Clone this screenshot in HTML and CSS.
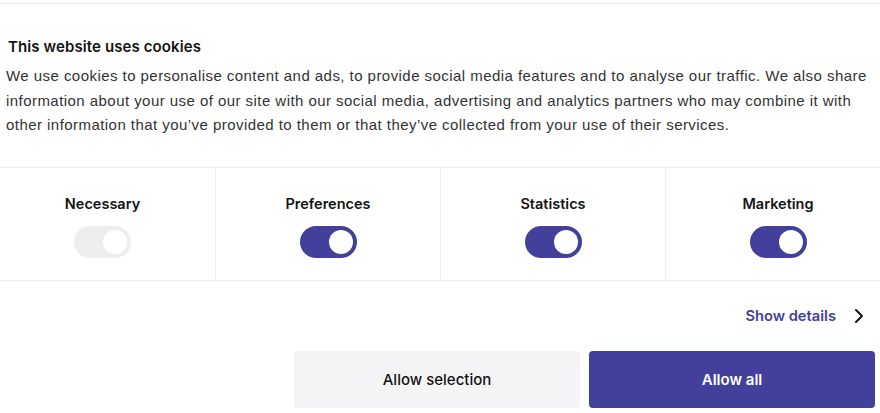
FILE: index.html
```html
<!DOCTYPE html>
<html>
<head>
<meta charset="utf-8">
<link rel="stylesheet" href="styles.css">
</head>
<body>
<div class="dialog">
  <div class="content">
    <h2 class="title">This website uses cookies</h2>
    <p class="text">We use cookies to personalise content and ads, to provide social media features and to analyse our traffic. We also share information about your use of our site with our social media, advertising and analytics partners who may combine it with other information that you’ve provided to them or that they’ve collected from your use of their services.</p>
  </div>
  <div class="levels">
    <div class="level">
      <span class="label">Necessary</span>
      <span class="toggle disabled"><span class="knob"></span></span>
    </div>
    <div class="level">
      <span class="label">Preferences</span>
      <span class="toggle"><span class="knob"></span></span>
    </div>
    <div class="level">
      <span class="label">Statistics</span>
      <span class="toggle"><span class="knob"></span></span>
    </div>
    <div class="level">
      <span class="label">Marketing</span>
      <span class="toggle"><span class="knob"></span></span>
    </div>
  </div>
  <div class="details">
    <a class="details-link">Show details</a>
    <svg class="chev" width="10" height="16" viewBox="0 0 10 16"><path d="M2 2l6 6-6 6" fill="none" stroke="#141414" stroke-width="2" stroke-linecap="round" stroke-linejoin="round"/></svg>
  </div>
  <div class="buttons">
    <button class="btn btn-light">Allow selection</button>
    <button class="btn btn-primary">Allow all</button>
  </div>
</div>
</body>
</html>
```
FILE: styles.css
```css
* { box-sizing: border-box; }
html, body { margin: 0; padding: 0; background: #fff; overflow: hidden; }
body { width: 880px; height: 413px; }
.dialog {
  border-top: 1px solid #eeeeee;
  margin-top: 3px;
}
.content { padding: 34px 6px 0 6px; }
.title {
  font-family: Inter, "Liberation Sans", sans-serif;
  font-weight: 600;
  font-size: 15px;
  color: #141414;
  margin: 0 0 0 2px;
  line-height: 18px;
  letter-spacing: 0.1px;
}
.text {
  font-family: "Liberation Sans", Arial, sans-serif;
  font-size: 15px;
  line-height: 24.5px;
  color: #333333;
  margin: 8px 0 0 0;
  letter-spacing: 0.45px;
}
.levels {
  display: grid;
  grid-template-columns: repeat(4, 225px);
  margin: 29px -10px 0 -10px;
  border-top: 1px solid #eeeeee;
  border-bottom: 1px solid #eeeeee;
  height: 114px;
}
.level {
  display: flex;
  flex-direction: column;
  align-items: center;
  padding-top: 27px;
  border-left: 1px solid #eeeeee;
}
.level:first-child { border-left: none; }
.label {
  font-family: Inter, "Liberation Sans", sans-serif;
  font-weight: 600;
  font-size: 14.5px;
  color: #141414;
  line-height: 18px;
}
.toggle {
  margin-top: 13px;
  width: 57px;
  height: 32px;
  border-radius: 16px;
  background: #43409b;
  display: flex;
  align-items: center;
  justify-content: flex-end;
  padding-right: 4px;
}
.toggle.disabled { background: #eeeeee; }
.knob {
  width: 24px;
  height: 24px;
  border-radius: 50%;
  background: #fff;
}
.details {
  display: flex;
  justify-content: flex-end;
  align-items: center;
  height: 70px;
  padding-right: 16px;
  gap: 18px;
}
.details-link {
  font-family: Inter, "Liberation Sans", sans-serif;
  font-weight: 600;
  font-size: 14.7px;
  color: #43409b;
}
.chev { display: block; }
.buttons {
  display: flex;
  justify-content: flex-end;
  gap: 9px;
  padding-right: 5px;
}
.btn {
  width: 286px;
  height: 57px;
  border: none;
  border-radius: 4px;
  font-family: Inter, "Liberation Sans", sans-serif;
  font-weight: 600;
  font-size: 15px;
}
.btn-light { background: #f4f4f6; color: #141414; font-weight: 500; }
.btn-primary { background: #43409b; color: #fff; }
```
